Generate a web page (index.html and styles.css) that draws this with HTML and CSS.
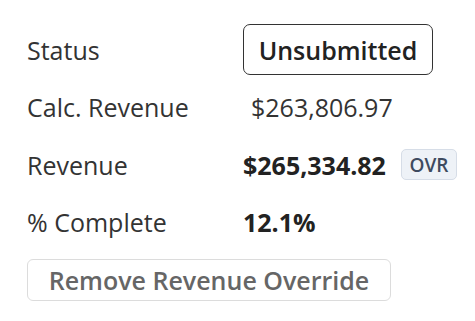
FILE: index.html
```html
<!DOCTYPE html>
<html>
<head>
<meta charset="utf-8">
<link rel="stylesheet" href="styles.css">
</head>
<body>
<div class="panel">
  <div class="grid">
    <div class="label">Status</div>
    <div class="value"><span class="status">Unsubmitted</span></div>
    <div class="label">Calc. Revenue</div>
    <div class="value calc">$263,806.97</div>
    <div class="label">Revenue</div>
    <div class="value strong">$265,334.82 <span class="badge">OVR</span></div>
    <div class="label">% Complete</div>
    <div class="value strong">12.1%</div>
  </div>
  <button class="remove">Remove Revenue Override</button>
</div>
</body>
</html>
```
FILE: styles.css
```css
html, body {
  margin: 0;
  padding: 0;
  background: #fff;
}
body {
  font-family: "Open Sans", "Noto Sans", sans-serif;
  font-size: 25px;
  color: #333;
}
.panel {
  padding: 24px 0 0 27px;
}
.grid {
  display: grid;
  grid-template-columns: 216px auto;
  grid-auto-rows: 51px;
  row-gap: 6.5px;
  align-items: center;
}
.label {
  color: #333;
}
.value {
  display: flex;
  align-items: center;
}
.calc {
  padding-left: 8px;
}
.strong {
  font-weight: 700;
  color: #222;
}
.status {
  box-sizing: border-box;
  display: inline-flex;
  align-items: center;
  height: 51px;
  width: 190px;
  justify-content: center;
  padding: 0;
  border: 1.5px solid #333;
  border-radius: 7px;
  font-weight: 600;
  color: #222;
}
.badge {
  box-sizing: border-box;
  display: inline-flex;
  align-items: center;
  justify-content: center;
  height: 31px;
  width: 56px;
  margin-left: 15px;
  background: #eef2f7;
  border: 1px solid #d6dde7;
  border-radius: 5px;
  font-size: 19px;
  font-weight: 600;
  color: #3e4b5f;
}
.remove {
  box-sizing: border-box;
  display: block;
  margin-top: 11.5px;
  height: 42px;
  width: 364px;
  padding: 0;
  background: #fff;
  border: 1px solid #dcdcdc;
  border-radius: 6px;
  font-family: "Open Sans", "Noto Sans", sans-serif;
  font-size: 25px;
  font-weight: 600;
  color: #666;
}
```
